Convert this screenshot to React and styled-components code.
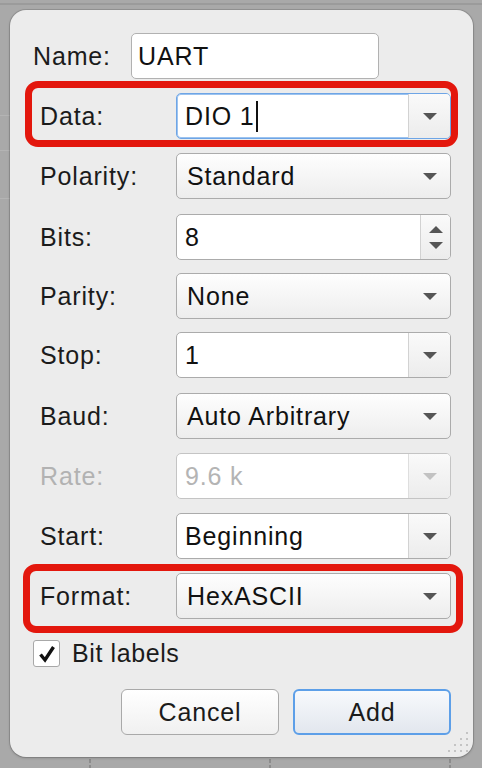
import React from 'react'
import styled, { createGlobalStyle, css } from 'styled-components'

const GlobalStyle = createGlobalStyle`
  html, body {
    margin: 0;
    padding: 0;
  }
  body {
    background-color: #a9a9a9;
    background-image:
      linear-gradient(#9b9b9b, #9b9b9b),
      linear-gradient(#b4b4b4, #b4b4b4),
      linear-gradient(#b4b4b4, #b4b4b4),
      linear-gradient(#b4b4b4, #b4b4b4),
      repeating-linear-gradient(#8c8c8c 0 4px, transparent 4px 6px),
      repeating-linear-gradient(#8c8c8c 0 4px, transparent 4px 6px),
      repeating-linear-gradient(#8c8c8c 0 4px, transparent 4px 6px);
    background-repeat: no-repeat;
    background-size: 100% 2px, 10px 1px, 10px 1px, 10px 1px, 2px 10px, 2px 10px, 2px 10px;
    background-position: 0 3px, 0 115px, 0 150px, 0 198px, 89px 759px, 269px 759px, 449px 759px;
    font-family: "Liberation Sans", Arial, sans-serif;
  }
`

const Page = styled.div`
  width: 482px;
  height: 768px;
  padding: 10px 0 0 10px;
  box-sizing: border-box;
`

const Dialog = styled.div`
  position: relative;
  width: 463px;
  height: 747px;
  box-sizing: border-box;
  padding: 23px 22px 0 23px;
  background: #ececec;
  border-radius: 16px;
  box-shadow: 0 0 0 1px rgba(0, 0, 0, 0.12), 0 1px 3px rgba(0, 0, 0, 0.2);
  display: flex;
  flex-direction: column;
`

const Form = styled.div`
  display: flex;
  flex-direction: column;
  gap: 14px;
`

const Row = styled.div`
  position: relative;
  display: flex;
  align-items: center;
  height: 46px;
  padding-left: ${p => p.$indent || 0}px;
  margin-top: ${p => p.$nudge || 0}px;
  ${p => p.$mark && css`
    &::after {
      content: '';
      position: absolute;
      top: ${-p.$mark[0]}px;
      right: ${-p.$mark[1]}px;
      bottom: ${-p.$mark[2]}px;
      left: ${-p.$mark[3]}px;
      border: 7px solid #e3170d;
      border-radius: 13px;
      pointer-events: none;
    }
  `}
`

const Label = styled.div`
  width: ${p => p.$width}px;
  flex: none;
  font-size: 25px;
  letter-spacing: 0.85px;
  color: ${p => (p.$disabled ? '#b2b2b2' : '#1b1b1b')};
`

const TextBox = styled.div`
  width: 248px;
  height: 46px;
  box-sizing: border-box;
  border: 1px solid #b1b1b1;
  border-radius: 5px;
  background: #fff;
  display: flex;
  align-items: center;
  padding-left: 6px;
  font-size: 25px;
  letter-spacing: 0.85px;
  color: #111;
`

const Combo = styled.div`
  width: 275px;
  height: 46px;
  box-sizing: border-box;
  display: flex;
  border-radius: 5px;
  overflow: hidden;
  border: 1px solid ${p => (p.$focused ? '#6ea5e6' : p.$disabled ? '#c4c4c4' : '#ababab')};
  box-shadow: ${p => (p.$focused ? 'inset 0 0 0 1px #9cc3ef' : 'none')};
  background: ${p => (p.$editable ? '#fff' : 'linear-gradient(#fefefe, #ededed)')};
`

const ComboText = styled.div`
  flex: 1;
  display: flex;
  align-items: center;
  padding-left: ${p => (p.$editable ? 8 : 10)}px;
  font-size: 25px;
  letter-spacing: 0.85px;
  color: ${p => (p.$disabled ? '#b4b4b4' : '#111')};
  white-space: nowrap;
`

const Caret = styled.span`
  display: inline-block;
  width: 2px;
  height: 31px;
  margin-left: 1px;
  background: #111;
`

const ComboButton = styled.div`
  width: ${p => p.$width || 41}px;
  flex: none;
  display: flex;
  flex-direction: column;
  align-items: center;
  justify-content: center;
  gap: 9px;
  ${p => p.$editable && css`
    border-left: 1px solid ${p.$disabled ? '#dedede' : '#d2d2d2'};
    background: linear-gradient(#fafafa, #ececec);
  `}
`

const Arrow = ({ up, color = '#555' }) => (
  <svg width="14" height="7" viewBox="0 0 14 7">
    <polygon points={up ? '0,7 14,7 7,0' : '0,0 14,0 7,7'} fill={color} />
  </svg>
)

const CheckRow = styled.div`
  display: flex;
  align-items: center;
  gap: 12px;
  margin-top: 21px;
  height: 27px;
`

const Box = styled.div`
  width: 27px;
  height: 27px;
  box-sizing: border-box;
  border: 1px solid #a8a8a8;
  border-radius: 3px;
  background: #fff;
  display: flex;
  align-items: center;
  justify-content: center;
`

const CheckText = styled.div`
  font-size: 25px;
  letter-spacing: 0.6px;
  color: #1b1b1b;
`

const Buttons = styled.div`
  display: flex;
  justify-content: flex-end;
  gap: 14px;
  margin-top: 22px;
`

const Button = styled.div`
  width: 158px;
  height: 46px;
  box-sizing: border-box;
  border-radius: 6px;
  display: flex;
  align-items: center;
  justify-content: center;
  font-size: 25px;
  letter-spacing: 0.85px;
  color: #1b1b1b;
  border: ${p => (p.$primary ? '2px solid #5d9fe8' : '1px solid #a9a9a9')};
  background: ${p => (p.$primary ? 'linear-gradient(#f7f9fc, #e2e7ee)' : 'linear-gradient(#ffffff, #f0f0f0)')};
`

const Grip = styled.svg`
  position: absolute;
  right: 3px;
  bottom: 3px;
`

const fields = [
  { label: 'Data', value: 'DIO 1', editable: true, focused: true, caret: true, mark: [12, 7, 8, 8] },
  { label: 'Polarity', value: 'Standard' },
  { label: 'Bits', value: '8', spin: true, nudge: 1 },
  { label: 'Parity', value: 'None', nudge: -1 },
  { label: 'Stop', value: '1', editable: true, nudge: -1 },
  { label: 'Baud', value: 'Auto Arbitrary', nudge: 1 },
  { label: 'Rate', value: '9.6 k', editable: true, disabled: true },
  { label: 'Start', value: 'Beginning', editable: true },
  { label: 'Format', value: 'HexASCII', mark: [9, 12, 14, 10] },
]

function Field({ f }) {
  const editable = f.editable || f.spin
  return (
    <Row $indent={7} $nudge={f.nudge} $mark={f.mark}>
      <Label $width={136} $disabled={f.disabled}>{f.label}:</Label>
      <Combo $editable={editable} $focused={f.focused} $disabled={f.disabled}>
        <ComboText $editable={editable} $disabled={f.disabled}>
          {f.value}
          {f.caret && <Caret />}
        </ComboText>
        {f.spin ? (
          <ComboButton $editable $width={29}>
            <Arrow up />
            <Arrow />
          </ComboButton>
        ) : (
          <ComboButton $editable={editable} $disabled={f.disabled}>
            <Arrow color={f.disabled ? '#c2c2c2' : '#555'} />
          </ComboButton>
        )}
      </Combo>
    </Row>
  )
}

export default function App() {
  const dots = [[14, 2], [14, 8], [8, 8], [14, 14], [8, 14], [2, 14], [14, 20], [8, 20], [2, 20], [-4, 20]]
  return (
    <Page>
      <GlobalStyle />
      <Dialog>
        <Form>
          <Row>
            <Label $width={98}>Name:</Label>
            <TextBox>UART</TextBox>
          </Row>
          {fields.map(f => <Field key={f.label} f={f} />)}
        </Form>
        <CheckRow>
          <Box>
            <svg width="18" height="18" viewBox="0 0 18 18">
              <path d="M2.5 9.5 L7 15 L15.5 2" fill="none" stroke="#111" strokeWidth="3.4" strokeLinejoin="miter" />
            </svg>
          </Box>
          <CheckText>Bit labels</CheckText>
        </CheckRow>
        <Buttons>
          <Button>Cancel</Button>
          <Button $primary>Add</Button>
        </Buttons>
        <Grip width="24" height="24" viewBox="-6 0 24 24">
          {dots.map(([x, y]) => (
            <rect key={`${x}-${y}`} x={x} y={y} width="2" height="2" fill="#c4c4c4" />
          ))}
        </Grip>
      </Dialog>
    </Page>
  )
}
